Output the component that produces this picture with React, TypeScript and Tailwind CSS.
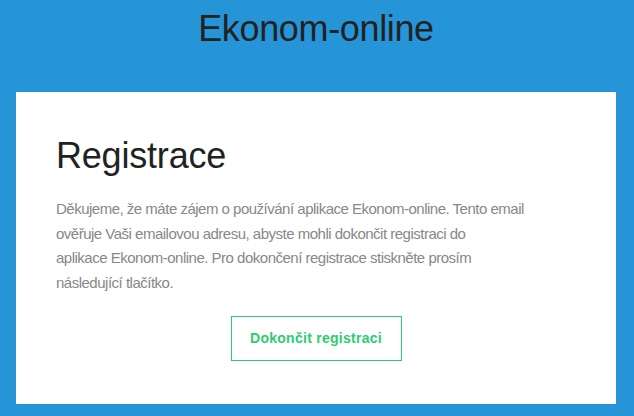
import React from "react";

export default function App() {
  return (
    <div
      className="min-h-screen w-full bg-[#2595d8] pt-[9px] pb-3"
      style={{ fontFamily: '"Liberation Sans", Arial, sans-serif' }}
    >
      {/* Header */}
      <h1 className="text-center text-[36px] leading-[40px] tracking-[-0.35px] text-[#222222] w-[600px] ml-4">
        Ekonom-online
      </h1>

      {/* Card */}
      <div className="mt-[43px] ml-4 w-[600px] bg-white pt-[44px] pb-[43px] px-10">
        <h2 className="text-[36px] leading-[40px] tracking-[-0.2px] text-[#222222] mb-[21px]">
          Registrace
        </h2>
        <p className="text-[15px] leading-[24.7px] tracking-[-0.5px] text-[#888888] mb-[20px]">
          Děkujeme, že máte zájem o používání aplikace Ekonom-online. Tento email
          <br />
          ověřuje Vaši emailovou adresu, abyste mohli dokončit registraci do
          <br />
          aplikace Ekonom-online. Pro dokončení registrace stiskněte prosím
          <br />
          následující tlačítko.
        </p>
        <div className="flex justify-center">
          <button
            type="button"
            className="w-[171px] h-[45px] border border-solid border-[#2ecc71] text-[#2ecc71] text-sm tracking-[0.27px] font-bold flex items-center justify-center"
          >
            Dokončit registraci
          </button>
        </div>
      </div>
    </div>
  );
}
